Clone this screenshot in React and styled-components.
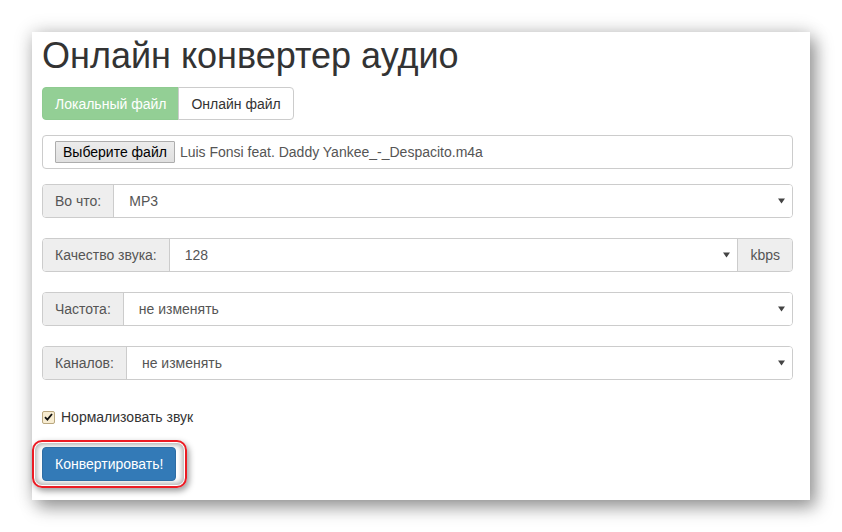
import React from "react";
import styled, { createGlobalStyle } from "styled-components";

const Global = createGlobalStyle`
  html, body { margin: 0; padding: 0; background: #fff; }
  body { font-family: "Liberation Sans", Arial, sans-serif; font-size: 14px; color: #333; }
  * { box-sizing: border-box; }
`;

const Page = styled.div`
  width: 842px;
  height: 532px;
  padding: 32px 32px 0 32px;
  overflow: hidden;
`;

const Panel = styled.div`
  width: 778px;
  background: #fff;
  padding: 4px 17px 12px 10px;
  box-shadow: 0 0 18px rgba(0, 0, 0, 0.2), 6px 8px 16px rgba(0, 0, 0, 0.34);
  display: flex;
  flex-direction: column;
`;

const Title = styled.h1`
  margin: 0;
  font-size: 36px;
  line-height: 40px;
  font-weight: 400;
  color: #333;
`;

const Tabs = styled.div`
  display: flex;
  margin-top: 11px;
`;

const Tab = styled.button`
  height: 33px;
  padding: 0 12px;
  font-family: inherit;
  font-size: 14px;
  border: 1px solid ${(p) => (p.$active ? "#8fcb91" : "#ccc")};
  background: ${(p) => (p.$active ? "#93cf95" : "#fff")};
  color: ${(p) => (p.$active ? "#fff" : "#333")};
  border-radius: ${(p) => (p.$first ? "4px 0 0 4px" : "0 4px 4px 0")};
  margin-left: ${(p) => (p.$first ? "0" : "-1px")};
  cursor: pointer;
`;

const FileBox = styled.div`
  margin-top: 15px;
  height: 34px;
  border: 1px solid #ccc;
  border-radius: 4px;
  display: flex;
  align-items: center;
  padding: 0 12px;
  gap: 5px;
  color: #555;
`;

const FileButton = styled.span`
  height: 22px;
  padding: 0 7px;
  display: inline-flex;
  align-items: center;
  border: 1px solid #adadad;
  background: linear-gradient(#ececec, #e0e0e0);
  color: #000;
  font-size: 14px;
  border-radius: 1px;
`;

const Group = styled.div`
  margin-top: ${(p) => (p.$first ? "15px" : "20px")};
  height: 34px;
  display: flex;
  border: 1px solid #ccc;
  border-radius: 4px;
  overflow: hidden;
`;

const Addon = styled.div`
  background: #eee;
  color: #555;
  padding: 0 12px;
  display: flex;
  align-items: center;
  white-space: nowrap;
  border-right: ${(p) => (p.$end ? "none" : "1px solid #ccc")};
  border-left: ${(p) => (p.$end ? "1px solid #ccc" : "none")};
`;

const SelectBox = styled.div`
  flex: 1;
  display: flex;
  align-items: center;
  justify-content: space-between;
  padding: 0 7px 0 15px;
  color: #555;
  background: #fff;
`;

const Arrow = () => (
  <svg width="7" height="6" viewBox="0 0 7 6">
    <path d="M0 0.5 H7 L3.5 5.5 Z" fill="#444" />
  </svg>
);

const CheckRow = styled.label`
  margin-top: 27px;
  height: 20px;
  display: flex;
  align-items: center;
  gap: 6px;
  color: #333;
`;

const CheckBox = styled.span`
  width: 13px;
  height: 13px;
  border: 1px solid #b9a77f;
  background: #f7ecd1;
  border-radius: 2px;
  display: inline-flex;
  align-items: center;
  justify-content: center;
`;

const Ring = styled.div`
  align-self: flex-start;
  margin-top: 13px;
  margin-left: -10px;
  padding: 5px 9px 5px 8px;
  border: 2px solid #ec1c24;
  border-radius: 10px;
  box-shadow: inset 0 0 0 1px #fff, inset 0 0 5px 3px rgba(0, 0, 0, 0.3),
    2px 3px 6px rgba(0, 0, 0, 0.4);
`;

const ConvertButton = styled.button`
  height: 34px;
  padding: 0 12px;
  background: #337ab7;
  border: 1px solid #2e6da4;
  border-radius: 4px;
  color: #fff;
  font-family: inherit;
  font-size: 14px;
  cursor: pointer;
  display: block;
`;

export default function App() {
  return (
    <>
      <Global />
      <Page>
        <Panel>
          <Title>Онлайн конвертер аудио</Title>
          <Tabs>
            <Tab $active $first>Локальный файл</Tab>
            <Tab>Онлайн файл</Tab>
          </Tabs>
          <FileBox>
            <FileButton>Выберите файл</FileButton>
            <span>Luis Fonsi feat. Daddy Yankee_-_Despacito.m4a</span>
          </FileBox>
          <Group $first>
            <Addon>Во что:</Addon>
            <SelectBox>
              <span>MP3</span>
              <Arrow />
            </SelectBox>
          </Group>
          <Group>
            <Addon>Качество звука:</Addon>
            <SelectBox>
              <span>128</span>
              <Arrow />
            </SelectBox>
            <Addon $end>kbps</Addon>
          </Group>
          <Group>
            <Addon>Частота:</Addon>
            <SelectBox>
              <span>не изменять</span>
              <Arrow />
            </SelectBox>
          </Group>
          <Group>
            <Addon>Каналов:</Addon>
            <SelectBox>
              <span>не изменять</span>
              <Arrow />
            </SelectBox>
          </Group>
          <CheckRow>
            <CheckBox>
              <svg width="9" height="8" viewBox="0 0 9 8">
                <path d="M1 4.2 L3.4 6.6 L8 1" fill="none" stroke="#111" strokeWidth="1.8" />
              </svg>
            </CheckBox>
            Нормализовать звук
          </CheckRow>
          <Ring>
            <ConvertButton>Конвертировать!</ConvertButton>
          </Ring>
        </Panel>
      </Page>
    </>
  );
}
